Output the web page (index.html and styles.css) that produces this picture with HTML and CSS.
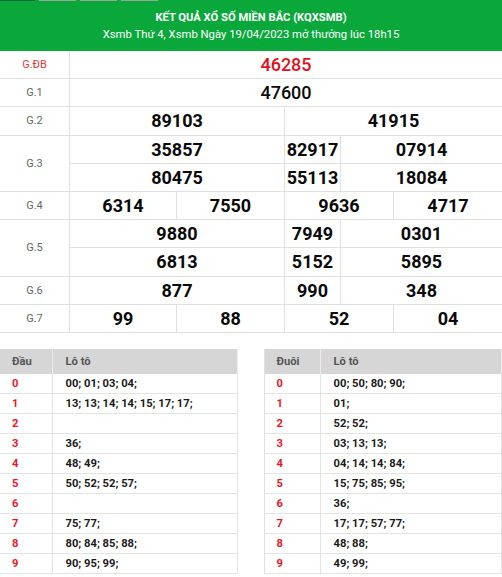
FILE: index.html
```html
<!DOCTYPE html>
<html lang="vi">
<head>
<meta charset="utf-8">
<title>KQXSMB</title>
<link rel="stylesheet" href="styles.css">
</head>
<body>
<div class="header">
  <div class="tabs"><span class="tab tab-on"></span><span class="tab"></span><span class="tab"></span><span class="tab"></span></div>
  <div class="title">KẾT QUẢ XỔ SỐ MIỀN BẮC (KQXSMB)</div>
  <div class="subtitle">Xsmb Thứ 4, Xsmb Ngày 19/04/2023 mở thưởng lúc 18h15</div>
</div>

<div class="results">
  <div class="lbl lbl-db">G.ĐB</div>
  <div class="num num-db span5">46285</div>

  <div class="lbl">G.1</div>
  <div class="num num-mid span5">47600</div>

  <div class="lbl">G.2</div>
  <div class="num span2">89103</div>
  <div class="num span3">41915</div>

  <div class="lbl rows2">G.3</div>
  <div class="num span2">35857</div>
  <div class="num">82917</div>
  <div class="num span2">07914</div>
  <div class="num span2">80475</div>
  <div class="num">55113</div>
  <div class="num span2">18084</div>

  <div class="lbl">G.4</div>
  <div class="num">6314</div>
  <div class="num">7550</div>
  <div class="num span2">9636</div>
  <div class="num">4717</div>

  <div class="lbl rows2">G.5</div>
  <div class="num span2">9880</div>
  <div class="num">7949</div>
  <div class="num span2">0301</div>
  <div class="num span2">6813</div>
  <div class="num">5152</div>
  <div class="num span2">5895</div>

  <div class="lbl">G.6</div>
  <div class="num span2">877</div>
  <div class="num">990</div>
  <div class="num span2">348</div>

  <div class="lbl">G.7</div>
  <div class="num">99</div>
  <div class="num">88</div>
  <div class="num span2">52</div>
  <div class="num">04</div>
</div>

<div class="loto">
  <table class="lt lt-left">
    <thead><tr><th class="c1">Đầu</th><th>Lô tô</th></tr></thead>
    <tbody>
      <tr><td class="d">0</td><td>00; 01; 03; 04;</td></tr>
      <tr><td class="d">1</td><td>13; 13; 14; 14; 15; 17; 17;</td></tr>
      <tr><td class="d">2</td><td></td></tr>
      <tr><td class="d">3</td><td>36;</td></tr>
      <tr><td class="d">4</td><td>48; 49;</td></tr>
      <tr><td class="d">5</td><td>50; 52; 52; 57;</td></tr>
      <tr><td class="d">6</td><td></td></tr>
      <tr><td class="d">7</td><td>75; 77;</td></tr>
      <tr><td class="d">8</td><td>80; 84; 85; 88;</td></tr>
      <tr><td class="d">9</td><td>90; 95; 99;</td></tr>
    </tbody>
  </table>
  <table class="lt lt-right">
    <thead><tr><th class="c1">Đuôi</th><th>Lô tô</th></tr></thead>
    <tbody>
      <tr><td class="d">0</td><td>00; 50; 80; 90;</td></tr>
      <tr><td class="d">1</td><td>01;</td></tr>
      <tr><td class="d">2</td><td>52; 52;</td></tr>
      <tr><td class="d">3</td><td>03; 13; 13;</td></tr>
      <tr><td class="d">4</td><td>04; 14; 14; 84;</td></tr>
      <tr><td class="d">5</td><td>15; 75; 85; 95;</td></tr>
      <tr><td class="d">6</td><td>36;</td></tr>
      <tr><td class="d">7</td><td>17; 17; 57; 77;</td></tr>
      <tr><td class="d">8</td><td>48; 88;</td></tr>
      <tr><td class="d">9</td><td>49; 99;</td></tr>
    </tbody>
  </table>
</div>
</body>
</html>
```

FILE: styles.css
```css
* { box-sizing: border-box; }

html, body {
  margin: 0;
  padding: 0;
  background: #fff;
  font-family: Roboto, "Liberation Sans", Arial, sans-serif;
  color: #111;
}

.header {
  background: #0aa83a;
  color: #fff;
  text-align: center;
  height: 51px;
}

.tabs {
  display: flex;
  gap: 4px;
  height: 1px;
}

.tab {
  width: 37px;
  height: 1px;
  background: #9aa89c;
}

.tab-on {
  width: 35px;
  background: #06683a;
}

.title {
  padding-top: 8px;
  font-size: 11.2px;
  font-weight: 700;
  line-height: 17px;
}

.subtitle {
  font-size: 11.3px;
  line-height: 17px;
}

.results {
  display: grid;
  grid-template-columns: 69px 106px 107px 55px 52px 108px;
  grid-auto-rows: 27.2px;
  gap: 1px;
  background: #e0e0e0;
  border-bottom: 1px solid #e0e0e0;
}

.lbl, .num {
  background: #fff;
  display: flex;
  align-items: center;
  justify-content: center;
}

.lbl {
  font-size: 11px;
  color: #666;
}

.lbl-db { color: #e53935; }

.rows2 { grid-row: span 2; }

.num {
  font-size: 18px;
  font-weight: 700;
  color: #0a0a0a;
  white-space: nowrap;
}

.num-db {
  color: #e0121b;
  font-weight: 500;
}

.num-mid { font-weight: 500; }

.span2 { grid-column: span 2; }
.span3 { grid-column: span 3; }
.span5 { grid-column: span 5; }

.loto {
  display: flex;
  justify-content: space-between;
  margin-top: 16px;
}

.lt {
  width: 47.5%;
  border-collapse: collapse;
  font-size: 11.2px;
}

.lt-left { border-right: 1px solid #e0e0e0; }
.lt-right { border-left: 1px solid #e0e0e0; }

.lt th {
  background: #d6d6d6;
  color: #555;
  font-weight: 700;
  text-align: left;
  height: 25px;
  padding: 0 0 0 13px;
  border-right: 1px solid #ececec;
}

.lt th.c1 { padding-left: 12px; }
.lt-left .c1 { width: 52px; }
.lt-right .c1 { width: 56px; }

.lt td {
  height: 20px;
  padding: 0 0 0 13px;
  font-weight: 700;
  color: #1a1a1a;
  border-bottom: 1px solid #e4e4e4;
  border-right: 1px solid #e4e4e4;
}

.lt td.d {
  color: #f0141e;
  padding-left: 12px;
}
```
